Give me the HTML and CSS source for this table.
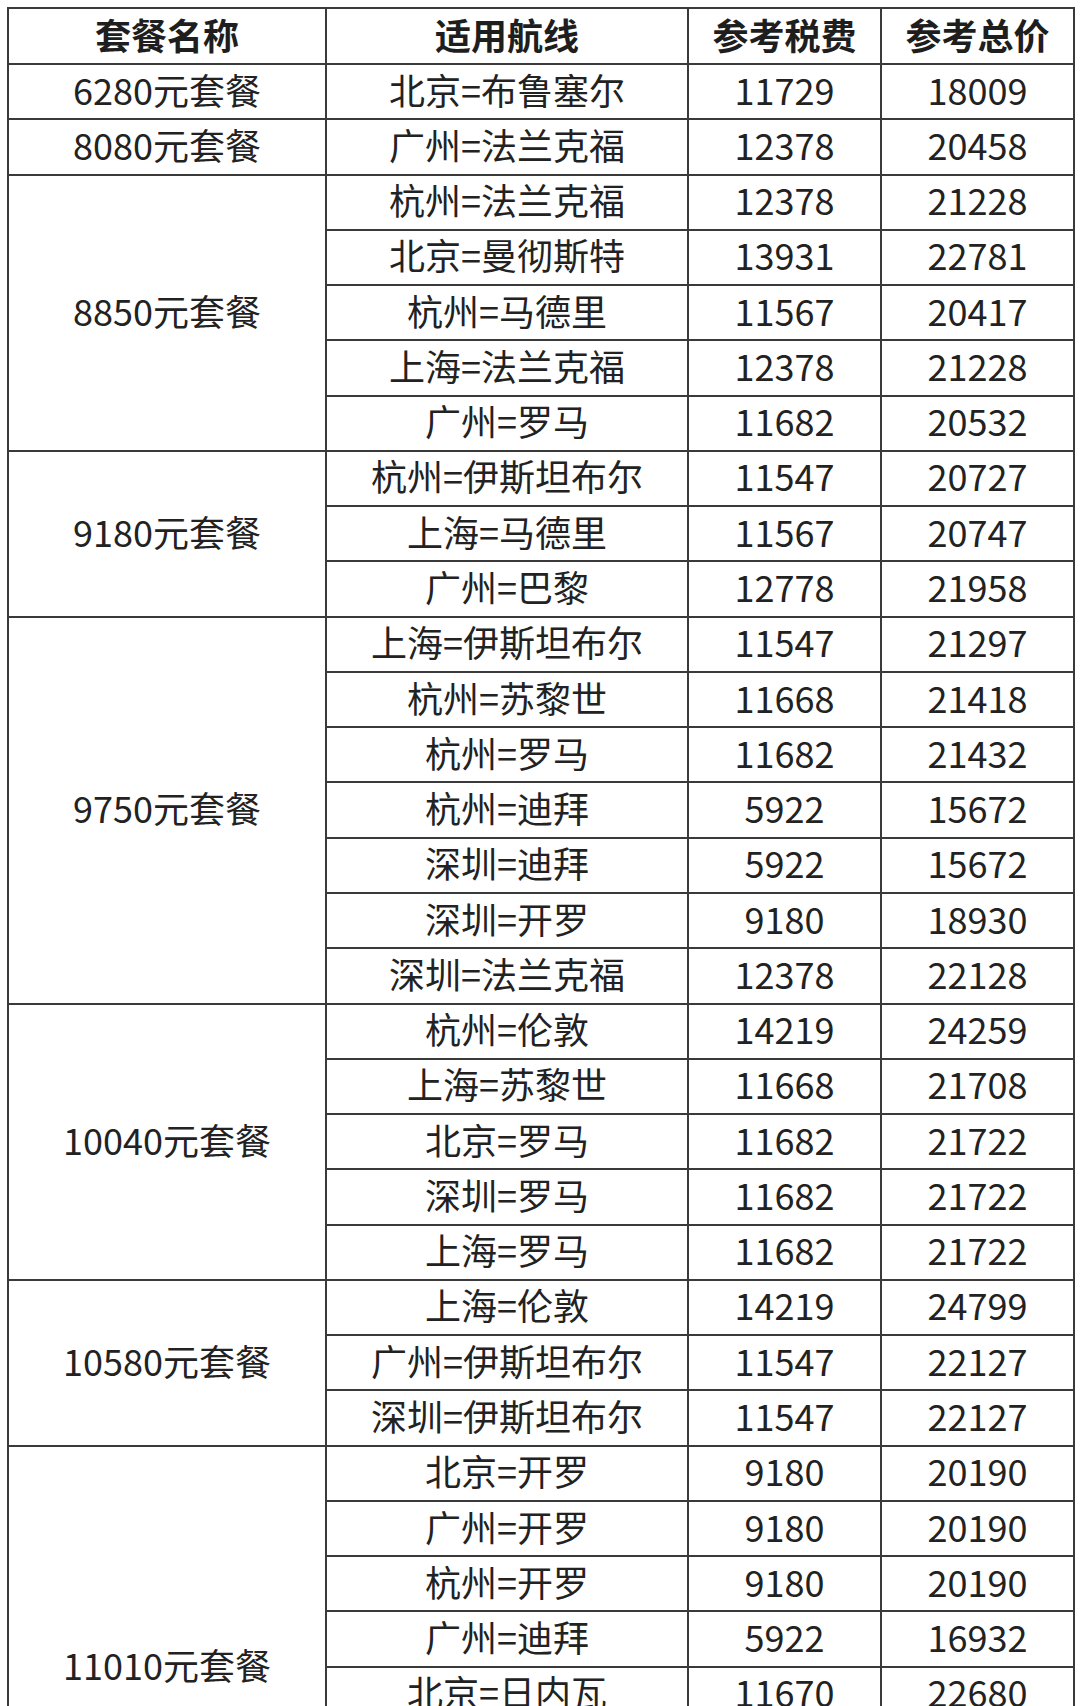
FILE: index.html
```html
<!DOCTYPE html>
<html lang="zh-CN">
<head>
<meta charset="utf-8">
<title>套餐</title>
<link rel="stylesheet" href="styles.css">
</head>
<body>
<table class="fares">
<colgroup><col class="c1"><col class="c2"><col class="c3"><col class="c4"></colgroup>
<thead>
<tr class="head"><th>套餐名称</th><th>适用航线</th><th>参考税费</th><th>参考总价</th></tr>
</thead>
<tbody>
<tr><td>6280元套餐</td><td>北京=布鲁塞尔</td><td>11729</td><td>18009</td></tr>
<tr><td>8080元套餐</td><td>广州=法兰克福</td><td>12378</td><td>20458</td></tr>
<tr><td rowspan="5">8850元套餐</td><td>杭州=法兰克福</td><td>12378</td><td>21228</td></tr>
<tr><td>北京=曼彻斯特</td><td>13931</td><td>22781</td></tr>
<tr><td>杭州=马德里</td><td>11567</td><td>20417</td></tr>
<tr><td>上海=法兰克福</td><td>12378</td><td>21228</td></tr>
<tr><td>广州=罗马</td><td>11682</td><td>20532</td></tr>
<tr><td rowspan="3">9180元套餐</td><td>杭州=伊斯坦布尔</td><td>11547</td><td>20727</td></tr>
<tr><td>上海=马德里</td><td>11567</td><td>20747</td></tr>
<tr><td>广州=巴黎</td><td>12778</td><td>21958</td></tr>
<tr><td rowspan="7">9750元套餐</td><td>上海=伊斯坦布尔</td><td>11547</td><td>21297</td></tr>
<tr><td>杭州=苏黎世</td><td>11668</td><td>21418</td></tr>
<tr><td>杭州=罗马</td><td>11682</td><td>21432</td></tr>
<tr><td>杭州=迪拜</td><td>5922</td><td>15672</td></tr>
<tr><td>深圳=迪拜</td><td>5922</td><td>15672</td></tr>
<tr><td>深圳=开罗</td><td>9180</td><td>18930</td></tr>
<tr><td>深圳=法兰克福</td><td>12378</td><td>22128</td></tr>
<tr><td rowspan="5">10040元套餐</td><td>杭州=伦敦</td><td>14219</td><td>24259</td></tr>
<tr><td>上海=苏黎世</td><td>11668</td><td>21708</td></tr>
<tr><td>北京=罗马</td><td>11682</td><td>21722</td></tr>
<tr><td>深圳=罗马</td><td>11682</td><td>21722</td></tr>
<tr><td>上海=罗马</td><td>11682</td><td>21722</td></tr>
<tr><td rowspan="3">10580元套餐</td><td>上海=伦敦</td><td>14219</td><td>24799</td></tr>
<tr><td>广州=伊斯坦布尔</td><td>11547</td><td>22127</td></tr>
<tr><td>深圳=伊斯坦布尔</td><td>11547</td><td>22127</td></tr>
<tr><td rowspan="8">11010元套餐</td><td>北京=开罗</td><td>9180</td><td>20190</td></tr>
<tr><td>广州=开罗</td><td>9180</td><td>20190</td></tr>
<tr><td>杭州=开罗</td><td>9180</td><td>20190</td></tr>
<tr><td>广州=迪拜</td><td>5922</td><td>16932</td></tr>
<tr><td>北京=日内瓦</td><td>11670</td><td>22680</td></tr>
<tr><td></td><td></td><td></td></tr>
<tr><td></td><td></td><td></td></tr>
<tr><td></td><td></td><td></td></tr>
</tbody>
</table>
</body>
</html>
```
FILE: styles.css
```css
html, body {
  margin: 0;
  padding: 0;
  background: #ffffff;
  overflow: hidden;
}
body {
  padding: 7px 0 0 7px;
  font-family: "Noto Sans CJK SC", "Noto Sans", sans-serif;
  color: #222222;
}
.fares {
  border-collapse: collapse;
  table-layout: fixed;
  width: 1066px;
}
.c1 { width: 318px; }
.c2 { width: 362px; }
.c3 { width: 193px; }
.c4 { width: 193px; }
.fares th, .fares td {
  border: 2px solid #3a3a3a;
  padding: 0 0 6px;
  text-align: center;
  vertical-align: middle;
  font-size: 36px;
  line-height: 1;
  white-space: nowrap;
}
.fares th {
  font-weight: 700;
  color: #1e1e1e;
  padding-bottom: 4px;
}
.head th { height: 50px; }
.fares td { height: 47.28px; }
```
